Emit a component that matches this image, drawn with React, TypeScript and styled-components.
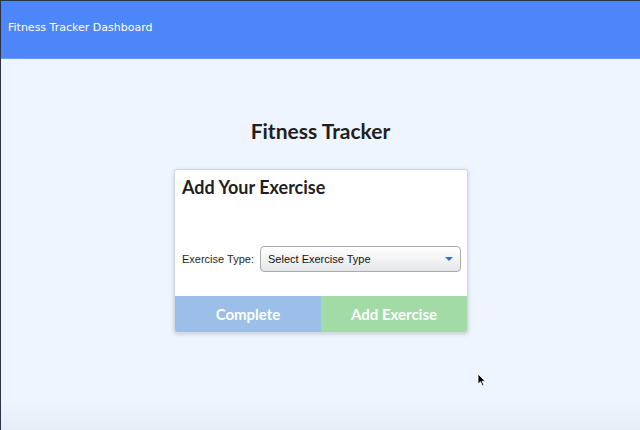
import styled, { createGlobalStyle } from 'styled-components';

const GlobalStyle = createGlobalStyle`
  html, body {
    margin: 0;
    padding: 0;
  }
  body {
    font-family: Lato, "Liberation Sans", sans-serif;
  }
`;

const Page = styled.div`
  position: relative;
  width: 640px;
  height: 430px;
  overflow: hidden;
  box-sizing: border-box;
  border-top: 1px solid #2b3445;
  border-left: 1px solid #2b3445;
  background: linear-gradient(to bottom, #eef5fe 0%, #eef5fe 93%, #e6edf8 100%);
  display: flex;
  flex-direction: column;
`;

const Header = styled.header`
  height: 58px;
  background: #4c86f8;
  border-bottom: 1px solid #6b9cf8;
  display: flex;
  align-items: center;
  padding-left: 7px;
  color: #ffffff;
  font-family: "DejaVu Sans", Verdana, sans-serif;
  font-size: 11px;
  padding-bottom: 5px;
  box-sizing: border-box;
`;

const Main = styled.main`
  display: flex;
  flex-direction: column;
  align-items: center;
  padding-top: 59px;
`;

const Title = styled.h1`
  margin: 0 0 26px;
  font-family: Lato, sans-serif;
  font-weight: 700;
  font-size: 21px;
  color: #1f1f1f;
`;

const Card = styled.section`
  width: 292px;
  background: #ffffff;
  border: 1px solid #d6d9de;
  border-radius: 3px;
  box-shadow: 0 1px 4px rgba(0, 0, 0, 0.18);
  overflow: hidden;
  margin-left: 1px;
`;

const CardTitle = styled.h2`
  margin: 0;
  padding: 6px 7px 0;
  height: 22px;
  line-height: 22px;
  font-family: Lato, sans-serif;
  font-weight: 700;
  font-size: 18px;
  color: #1f1f1f;
`;

const FieldRow = styled.div`
  display: flex;
  align-items: center;
  padding: 48px 6px 24px 7px;
  gap: 10px;
`;

const Label = styled.label`
  font-family: "Liberation Sans", Arial, sans-serif;
  font-size: 11px;
  color: #1f1f1f;
  white-space: nowrap;
  width: 68px;
  flex-shrink: 0;
`;

const Select = styled.div`
  flex: 1;
  height: 26px;
  box-sizing: border-box;
  border: 1px solid #a9adb3;
  border-radius: 4px;
  background: linear-gradient(to bottom, #ffffff 0%, #f4f4f5 50%, #e4e5e7 100%);
  display: flex;
  align-items: center;
  justify-content: space-between;
  padding: 0 7px 0 7px;
  font-family: "Liberation Sans", Arial, sans-serif;
  font-size: 11px;
  color: #111111;
`;

const Arrow = styled.span`
  width: 0;
  height: 0;
  border-left: 4px solid transparent;
  border-right: 4px solid transparent;
  border-top: 4px solid #2f6fd0;
`;

const Buttons = styled.div`
  display: grid;
  grid-template-columns: 1fr 1fr;
`;

const ActionButton = styled.button<{ $color: string }>`
  height: 36px;
  border: none;
  margin: 0;
  background: ${p => p.$color};
  color: #ffffff;
  font-family: Lato, sans-serif;
  font-weight: 700;
  font-size: 15px;
  cursor: pointer;
`;

const Cursor = styled.svg`
  position: absolute;
  left: 476px;
  top: 372px;
`;

export default function App() {
  return (
    <>
      <GlobalStyle />
      <Page>
        <Header>Fitness Tracker Dashboard</Header>
        <Main>
          <Title>Fitness Tracker</Title>
          <Card>
            <CardTitle>Add Your Exercise</CardTitle>
            <FieldRow>
              <Label>Exercise Type:</Label>
              <Select>
                <span>Select Exercise Type</span>
                <Arrow />
              </Select>
            </FieldRow>
            <Buttons>
              <ActionButton $color="#9bbfe8">Complete</ActionButton>
              <ActionButton $color="#a2dba6">Add Exercise</ActionButton>
            </Buttons>
          </Card>
        </Main>
        <Cursor width="10" height="14" viewBox="0 0 10 14">
          <path d="M1 1 L1 11 L3.5 8.8 L5.5 13 L7 12.3 L5 8.2 L8.3 8.2 Z" fill="#000" stroke="#fff" strokeWidth="0.8" />
        </Cursor>
      </Page>
    </>
  );
}
